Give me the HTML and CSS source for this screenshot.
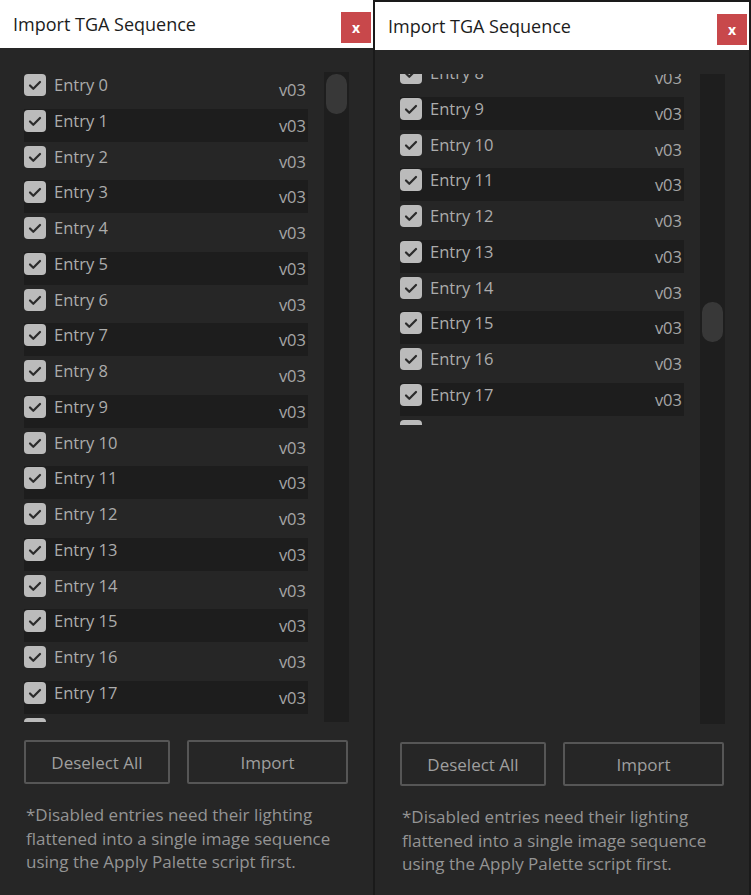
FILE: index.html
```html
<!DOCTYPE html>
<html lang="en">
  <head>
    <meta charset="UTF-8" />
    <title>Import TGA Sequence</title>
    <link rel="stylesheet" href="styles.css">
  </head>
  <body>
    <div class="desktop">
      <!-- Left dialog, scrolled to the top -->
      <div class="window">
        <div class="titlebar">
          <span class="title">Import TGA Sequence</span>
          <span class="close">x</span>
        </div>
        <div class="panel">
          <div class="list-area">
            <div class="viewport">
              <div class="entries" id="listLeft"></div>
            </div>
            <div class="track"><div class="thumb"></div></div>
          </div>
          <div class="buttons">
            <button class="btn btn-deselect">Deselect All</button>
            <button class="btn btn-import">Import</button>
          </div>
          <p class="note">*Disabled entries need their lighting flattened into a single image sequence using the Apply Palette script first.</p>
        </div>
      </div>

      <!-- Right dialog, scrolled halfway -->
      <div class="window window-right">
        <div class="titlebar">
          <span class="title">Import TGA Sequence</span>
          <span class="close">x</span>
        </div>
        <div class="panel">
          <div class="list-area">
            <div class="viewport viewport-short">
              <div class="entries entries-scrolled" id="listRight"></div>
            </div>
            <div class="track"><div class="thumb thumb-mid"></div></div>
          </div>
          <div class="buttons">
            <button class="btn btn-deselect">Deselect All</button>
            <button class="btn btn-import">Import</button>
          </div>
          <p class="note">*Disabled entries need their lighting flattened into a single image sequence using the Apply Palette script first.</p>
        </div>
      </div>
    </div>

    <script>
      const checkIcon =
        '<svg viewBox="0 0 20 20" width="20" height="20"><path d="M5 10.5l3.3 3.3L15 7" fill="none" stroke="#2b2b2b" stroke-width="2.2" stroke-linecap="round" stroke-linejoin="round"/></svg>';

      const buildRows = (count) => {
        let html = "";
        for (let i = 0; i < count; i++) {
          html += `
            <div class="entry${i % 2 === 1 ? " entry-dark" : ""}">
              <span class="check">${checkIcon}</span>
              <span class="label">Entry ${i}</span>
              <span class="version">v03</span>
            </div>`;
        }
        return html;
      };

      document.getElementById("listLeft").innerHTML = buildRows(20);
      document.getElementById("listRight").innerHTML = buildRows(20);
    </script>
  </body>
</html>
```

FILE: styles.css
```css
body {
  margin: 0;
  padding: 0;
  background-color: #1a1a1a;
  font-family: "Open Sans", "Noto Sans", Arial, sans-serif;
}

.desktop {
  display: flex;
  gap: 2px;
  width: 751px;
  height: 895px;
  overflow: hidden;
}

/* Dialog window */
.window {
  width: 373px;
  height: 895px;
  background-color: #262626;
  display: flex;
  flex-direction: column;
}

.window-right {
  width: 374px;
  margin-top: 2px;
}

.titlebar {
  height: 48px;
  background-color: #fff;
  display: flex;
  align-items: center;
  justify-content: space-between;
  padding: 0 2px 0 13px;
}

.title {
  font-size: 18px;
  color: #1c1c1c;
  margin-top: -1px;
}

.close {
  width: 30px;
  height: 31px;
  background-color: #c8484b;
  color: #fff;
  font-size: 14px;
  font-weight: bold;
  display: flex;
  align-items: center;
  justify-content: center;
  margin-top: 6px;
}

.panel {
  padding: 24px 24px 0 24px;
}

.window-right .panel {
  padding-left: 25px;
  padding-right: 24px;
}

/* List with scrollbar */
.list-area {
  display: flex;
  gap: 16px;
  height: 650px;
}

.viewport {
  width: 284px;
  height: 650px;
  overflow: hidden;
}

.viewport-short {
  height: 351px;
}

.entries {
  padding-top: 1px;
}

.entries-scrolled {
  margin-top: -300px;
}

.entry {
  display: flex;
  align-items: flex-start;
  height: 33px;
  margin-bottom: 2.75px;
}

.entry-dark {
  background-color: #1d1d1d;
}

.check {
  width: 22px;
  height: 22px;
  margin-top: 1px;
  border-radius: 4px;
  background-color: #bbbbbb;
  display: flex;
  align-items: center;
  justify-content: center;
}

.label {
  margin-left: 8px;
  font-size: 16.5px;
  line-height: 24px;
  color: #acacac;
}

.version {
  margin-left: auto;
  margin-right: 2px;
  margin-top: 5px;
  font-size: 16.5px;
  line-height: 24px;
  color: #a6a6a6;
}

.track {
  width: 25px;
  height: 650px;
  background-color: #1e1e1e;
  padding: 2px;
  box-sizing: border-box;
}

.thumb {
  height: 40px;
  border-radius: 10px;
  background-color: #383838;
}

.thumb-mid {
  margin-top: 226px;
}

/* Buttons */
.buttons {
  display: flex;
  gap: 17px;
  margin-top: 18px;
}

.btn {
  height: 44px;
  background-color: transparent;
  border: 2px solid #565656;
  border-radius: 2px;
  color: #9f9f9f;
  font-family: inherit;
  font-size: 17px;
  padding: 0;
}

.btn-deselect {
  width: 146px;
}

.btn-import {
  width: 161px;
}

.note {
  margin: 19px 0 0 2px;
  font-size: 17px;
  line-height: 23.5px;
  color: #949494;
  width: 330px;
}
```
